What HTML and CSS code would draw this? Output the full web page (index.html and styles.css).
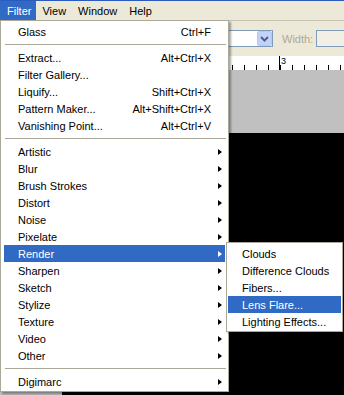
FILE: index.html
```html
<!DOCTYPE html>
<html lang="en">
<head>
  <meta charset="UTF-8">
  <title>Filter menu</title>
  <link rel="stylesheet" href="styles.css">
</head>
<body>
  <div class="app">
    <div class="menubar">
      <span class="mb-item active">Filter</span>
      <span class="mb-item">View</span>
      <span class="mb-item">Window</span>
      <span class="mb-item">Help</span>
    </div>

    <div class="toolbar">
      <div class="select">
        <span class="select-btn">
          <svg width="9" height="6" viewBox="0 0 9 6"><path d="M1 1 L4.5 4.5 L8 1" fill="none" stroke="#4d6185" stroke-width="2"/></svg>
        </span>
      </div>
      <span class="tb-label">Width:</span>
      <div class="tb-input"></div>
    </div>

    <div class="ruler"><div class="ruler-mark">3</div></div>
    <div class="pasteboard"></div>
    <div class="doc-row">
      <div class="doc-gutter"></div>
      <div class="doc"></div>
    </div>

    <!-- Filter dropdown -->
    <div class="menu">
      <div class="item"><span class="label">Glass</span><span class="key">Ctrl+F</span><span class="sub"></span></div>
      <div class="sep"></div>
      <div class="item"><span class="label">Extract...</span><span class="key">Alt+Ctrl+X</span><span class="sub"></span></div>
      <div class="item"><span class="label">Filter Gallery...</span><span class="key"></span><span class="sub"></span></div>
      <div class="item"><span class="label">Liquify...</span><span class="key">Shift+Ctrl+X</span><span class="sub"></span></div>
      <div class="item"><span class="label">Pattern Maker...</span><span class="key">Alt+Shift+Ctrl+X</span><span class="sub"></span></div>
      <div class="item"><span class="label">Vanishing Point...</span><span class="key">Alt+Ctrl+V</span><span class="sub"></span></div>
      <div class="sep"></div>
      <div class="item"><span class="label">Artistic</span><span class="sub"><i class="arrow"></i></span></div>
      <div class="item"><span class="label">Blur</span><span class="sub"><i class="arrow"></i></span></div>
      <div class="item"><span class="label">Brush Strokes</span><span class="sub"><i class="arrow"></i></span></div>
      <div class="item"><span class="label">Distort</span><span class="sub"><i class="arrow"></i></span></div>
      <div class="item"><span class="label">Noise</span><span class="sub"><i class="arrow"></i></span></div>
      <div class="item"><span class="label">Pixelate</span><span class="sub"><i class="arrow"></i></span></div>
      <div class="item hot"><span class="label">Render</span><span class="sub"><i class="arrow"></i></span></div>
      <div class="item"><span class="label">Sharpen</span><span class="sub"><i class="arrow"></i></span></div>
      <div class="item"><span class="label">Sketch</span><span class="sub"><i class="arrow"></i></span></div>
      <div class="item"><span class="label">Stylize</span><span class="sub"><i class="arrow"></i></span></div>
      <div class="item"><span class="label">Texture</span><span class="sub"><i class="arrow"></i></span></div>
      <div class="item"><span class="label">Video</span><span class="sub"><i class="arrow"></i></span></div>
      <div class="item"><span class="label">Other</span><span class="sub"><i class="arrow"></i></span></div>
      <div class="sep"></div>
      <div class="item"><span class="label">Digimarc</span><span class="sub"><i class="arrow"></i></span></div>
    </div>

    <!-- Render submenu -->
    <div class="submenu">
      <div class="item"><span class="label">Clouds</span></div>
      <div class="item"><span class="label">Difference Clouds</span></div>
      <div class="item"><span class="label">Fibers...</span></div>
      <div class="item hot"><span class="label">Lens Flare...</span></div>
      <div class="item"><span class="label">Lighting Effects...</span></div>
    </div>
  </div>
</body>
</html>
```

FILE: styles.css
```css
body {
  margin: 0;
  background: #000;
  font-family: "Liberation Sans", Arial, sans-serif;
  font-size: 11px;
  color: #000;
  overflow: hidden;
}

.app {
  position: relative;
  width: 344px;
  height: 395px;
  overflow: hidden;
  display: flex;
  flex-direction: column;
}

/* menu bar */
.menubar {
  display: flex;
  height: 19px;
  border-top: 1px solid #2b5bbf;
  background: #ece9d8;
}

.mb-item {
  display: flex;
  align-items: center;
  padding: 0 6px;
}

.mb-item.active {
  background: #316ac5;
  color: #fff;
  padding: 0 5px 0 7px;
}

/* options bar */
.toolbar {
  display: flex;
  align-items: center;
  height: 35px;
  border-top: 1px solid #c5c2b2;
  background: #ece9d8;
}

.toolbar > * {
  flex-shrink: 0;
}

.select {
  box-sizing: border-box;
  margin-left: 225px;
  width: 48px;
  height: 17px;
  border: 1px solid #7f9db9;
  background: #fff;
  display: flex;
  justify-content: flex-end;
}

.select-btn {
  box-sizing: border-box;
  width: 15px;
  height: 15px;
  background: #c1d3fb;
  border: 1px solid #b4c8f2;
  border-radius: 2px;
  display: flex;
  align-items: center;
  justify-content: center;
}

.tb-label {
  margin-left: 9px;
  color: #aca899;
}

.tb-input {
  box-sizing: border-box;
  margin-left: 3px;
  width: 40px;
  height: 17px;
  border: 1px solid #7f9db9;
  background: #f2f0e6;
}

/* ruler */
.ruler {
  height: 14px;
  background-color: #fff;
  background-image: repeating-linear-gradient(to right, #000 0 1px, transparent 1px 12px);
  background-size: 100% 5px;
  background-position: 4px bottom;
  background-repeat: no-repeat;
}

.ruler-mark {
  margin-left: 279px;
  height: 14px;
  border-left: 1px solid #000;
  padding-left: 1px;
  font-size: 9px;
  line-height: 10px;
  width: 8px;
  background: linear-gradient(#fff, #fff) no-repeat;
  background-size: 100% 9px;
}

.pasteboard {
  height: 63px;
  background: #c0c0c0;
}

.doc-row {
  flex: 1;
  display: flex;
}

.doc-gutter {
  width: 62px;
  background: #c0c0c0;
}

.doc {
  flex: 1;
  background: #000;
}

/* dropdown menus */
.menu,
.submenu {
  position: absolute;
  box-sizing: border-box;
  background: #fff;
  border: 1px solid #aca899;
  padding: 2px 0 1px;
  box-shadow: 2px 2px 2px rgba(0, 0, 0, 0.35);
}

.menu {
  left: 0;
  top: 20px;
  width: 229px;
}

.submenu {
  left: 226px;
  top: 242px;
  width: 117px;
}

.item {
  display: flex;
  align-items: center;
  height: 17px;
  margin: 0 3px;
  padding-left: 14px;
  white-space: nowrap;
}

.submenu .item {
  margin: 0 1px;
}

.item .label {
  flex: 1;
}

.item .sub {
  width: 14px;
  display: flex;
  justify-content: flex-end;
  padding-right: 3px;
  box-sizing: border-box;
}

.item.hot {
  background: #316ac5;
  color: #fff;
}

.arrow {
  width: 0;
  height: 0;
  border-top: 3.5px solid transparent;
  border-bottom: 3.5px solid transparent;
  border-left: 4px solid #000;
}

.item.hot .arrow {
  border-left-color: #fff;
}

.sep {
  height: 9px;
  margin: 0 2px 0 4px;
  background: linear-gradient(#aca899, #aca899) no-repeat 0 4px;
  background-size: 100% 1px;
}
```
